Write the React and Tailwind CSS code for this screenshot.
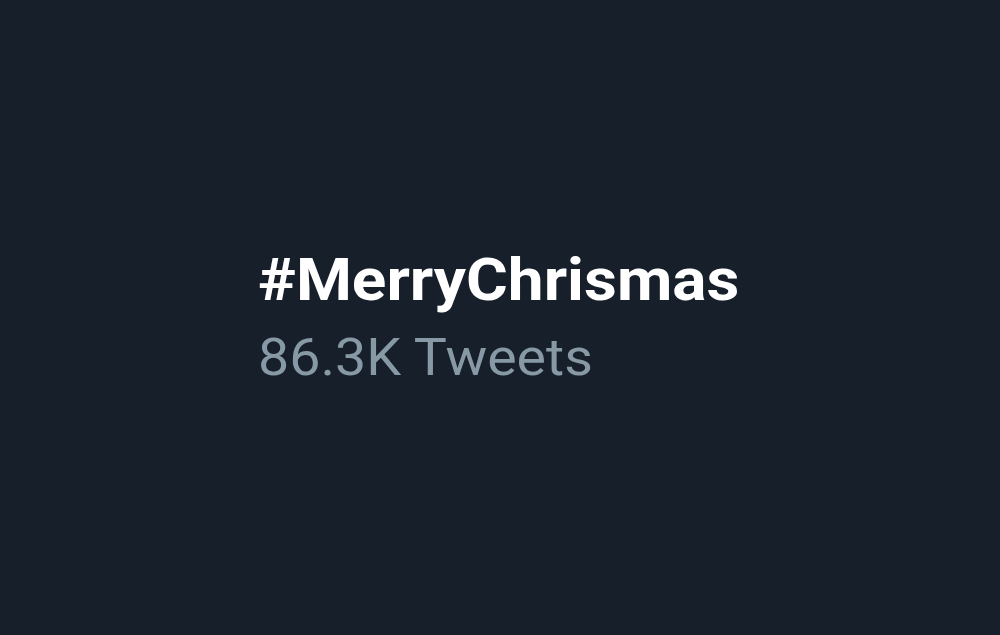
export default function App() {
  return (
    <div className="w-[1000px] h-[635px] bg-[#17202a] flex items-center justify-center" style={{ fontFamily: "Roboto, 'Liberation Sans', sans-serif" }}>
      <div className="flex flex-col pb-[3px] pr-[40px]">
        <div className="text-[59px] font-bold text-white leading-[70px] mb-[13px] origin-left scale-x-[1.084] whitespace-nowrap">#MerryChrismas</div>
        <div className="text-[52px] text-[#8899a6] leading-[60px] origin-left scale-x-[1.068] whitespace-nowrap">86.3K Tweets</div>
      </div>
    </div>
  );
}
